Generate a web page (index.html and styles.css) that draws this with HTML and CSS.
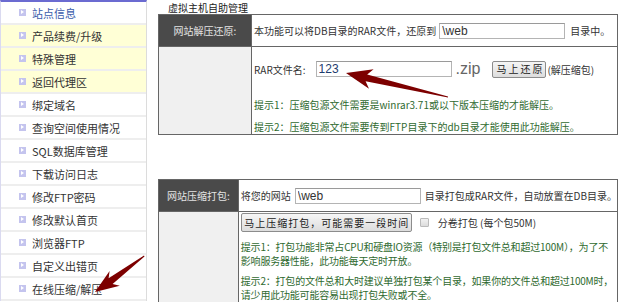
FILE: index.html
```html
<!DOCTYPE html>
<html lang="zh-CN">
<head>
  <meta charset="UTF-8">
  <title>虚拟主机自助管理</title>
  <link rel="stylesheet" href="styles.css">
</head>
<body>
  <div class="page">
    <ul class="side-menu">
      <li class="active"><span class="menu-icon"></span>站点信息</li>
      <li class="hl"><span class="menu-icon"></span>产品续费/升级</li>
      <li class="hl"><span class="menu-icon"></span>特殊管理</li>
      <li class="hl"><span class="menu-icon"></span>返回代理区</li>
      <li><span class="menu-icon"></span>绑定域名</li>
      <li><span class="menu-icon"></span>查询空间使用情况</li>
      <li><span class="menu-icon"></span>SQL数据库管理</li>
      <li><span class="menu-icon"></span>下载访问日志</li>
      <li><span class="menu-icon"></span>修改FTP密码</li>
      <li><span class="menu-icon"></span>修改默认首页</li>
      <li><span class="menu-icon"></span>浏览器FTP</li>
      <li><span class="menu-icon"></span>自定义出错页</li>
      <li><span class="menu-icon"></span>在线压缩/解压</li>
    </ul>

    <div class="main">
      <div class="main-title">虚拟主机自助管理</div>

      <!-- 解压还原 -->
      <table class="tool-table">
        <tr class="head-row">
          <th>网站解压还原:</th>
          <td>
            <div class="inline-form">
              <span>本功能可以将DB目录的RAR文件，还原到</span>
              <input class="txt txt-path" type="text" value="\web">
              <span class="after-txt">目录中。</span>
            </div>
          </td>
        </tr>
        <tr class="body-row">
          <th class="blank"></th>
          <td class="unzip-cell">
            <div class="inline-form form-line">
              <span>RAR文件名:</span>
              <input class="txt txt-name" type="text" value="123">
              <span class="ext">.zip</span>
              <button class="btn btn-small">马上还原</button>
              <span class="note">(解压缩包)</span>
            </div>
            <p class="tip tip-first">提示1：压缩包源文件需要是winrar3.71或以下版本压缩的才能解压。</p>
            <p class="tip tip-next">提示2：压缩包源文件需要传到FTP目录下的db目录才能使用此功能解压。</p>
          </td>
        </tr>
      </table>

      <!-- 压缩打包 -->
      <table class="tool-table second">
        <tr class="head-row">
          <th>网站压缩打包:</th>
          <td>
            <div class="inline-form">
              <span>将您的网站</span>
              <input class="txt txt-site" type="text" value="\web">
              <span class="after-site">目录打包成RAR文件，自动放置在DB目录。</span>
            </div>
          </td>
        </tr>
        <tr class="body-row">
          <th class="blank"></th>
          <td class="zip-cell">
            <div class="inline-form">
              <button class="btn btn-wide">马上压缩打包，可能需要一段时间</button>
              <input class="check" type="checkbox">
              <span class="check-label">分卷打包 (每个包50M)</span>
            </div>
            <p class="tip tip-zip">提示1：打包功能非常占CPU和硬盘IO资源（特别是打包文件总和超过100M），为了不<br>影响服务器性能，此功能每天定时开放。</p>
            <p class="tip tip-zip tip-zip-next">提示2：打包的文件总和大时建议单独打包某个目录，如果你的文件总和超过100M时，<br>请少用此功能可能容易出现打包失败或不全。</p>
          </td>
        </tr>
      </table>
    </div>
  </div>

  <svg class="arrows" width="620" height="302" viewBox="0 0 620 302">
    <polygon points="346,73 373.6,69.3 367.2,74.4 448,96.5 448,97.5 365.6,81.2 369,88.7" />
    <polygon points="95,292 109.6,270.9 108.6,278.3 144,255.5 144.5,256.5 112.6,284.1 119.8,285.7" />
  </svg>
</body>
</html>
```

FILE: styles.css
```css
body {
    margin: 0;
    font-family: "Noto Sans CJK SC", sans-serif;
    font-size: 10px;
    color: #333;
    background: #fff;
}
.page {
    display: flex;
    align-items: flex-start;
}

/* 左侧菜单 */
.side-menu {
    list-style: none;
    margin: 0;
    padding: 0;
    width: 145px;
    flex-shrink: 0;
    border-top: 2px solid #6b6bd1;
    border-left: 1px solid #dadaf0;
    border-right: 1px solid #dcdcdc;
    font-size: 11px;
}
.side-menu li {
    display: flex;
    align-items: center;
    height: 21px;
    border-bottom: 2px solid #eeeeee;
    background: #fff;
}
.side-menu li.hl {
    background: #ffffd6;
}
.side-menu li.active {
    color: #3b5cab;
}
.menu-icon {
    position: relative;
    width: 7px;
    height: 7px;
    margin: 0 6px 0 18px;
    background: #c4c4ee;
}
.menu-icon::after {
    content: "";
    position: absolute;
    left: 2px;
    top: 1px;
    border-left: 3px solid #fff;
    border-top: 2.5px solid transparent;
    border-bottom: 2.5px solid transparent;
}

/* 右侧内容 */
.main {
    margin-left: 11px;
    width: 460px;
}
.main-title {
    height: 14px;
    line-height: 15px;
    padding-left: 10px;
    color: #222;
}
.tool-table {
    width: 460px;
    border-collapse: collapse;
    border: 1px solid #666;
}
.tool-table.second {
    margin-top: 44px;
}
.tool-table th,
.tool-table td {
    border: 1px solid #666;
    padding: 0;
    font-weight: normal;
    text-align: left;
    vertical-align: middle;
}
.tool-table th {
    width: 92px;
    background: #4a4a4a;
    color: #e4e4e4;
    text-align: center;
}
.tool-table th.blank {
    background: #f0f0f0;
}
.head-row th,
.head-row td {
    height: 31px;
}
.tool-table td {
    padding-left: 2px;
}
.inline-form {
    display: flex;
    align-items: center;
    white-space: nowrap;
}
.txt {
    box-sizing: border-box;
    height: 16px;
    margin: 0;
    padding: 0 2px;
    border: 1px solid #b4b4b4;
    border-top-color: #9a9a9a;
    font-family: "Liberation Sans", sans-serif;
    font-size: 12px;
    color: #333;
    background: #fff;
}
.txt-path {
    width: 126px;
    margin-left: 3px;
}
.after-txt {
    margin-left: 5px;
}
.txt-site {
    width: 126px;
    margin-left: 4px;
}
.after-site {
    margin-left: 4px;
}

.unzip-cell {
    padding-top: 12px !important;
    vertical-align: top !important;
}
.form-line {
    height: 20px;
}
.txt-name {
    width: 136px;
    margin-left: 10px;
    color: #1d3c6e;
}
.ext {
    margin-left: 4px;
    font-family: "Liberation Sans", sans-serif;
    font-size: 16px;
    color: #666;
}
.btn {
    box-sizing: border-box;
    margin: 0;
    padding: 0;
    border: 1px solid #8c8c8c;
    border-radius: 2px;
    background: linear-gradient(#f6f6f6, #dddddd);
    font-family: "Noto Sans CJK SC", sans-serif;
    font-size: 10px;
    color: #222;
    line-height: 1;
}
.btn-small {
    width: 54px;
    height: 17px;
    margin-left: 12px;
    letter-spacing: 2px;
    padding-left: 2px;
}
.note {
    margin-left: 1px;
}
.tip {
    margin: 0;
    color: #2f6a2f;
    line-height: 13px;
    white-space: nowrap;
}
.tip-first {
    margin-top: 19px;
}
.tip-next {
    margin-top: 9px;
    margin-bottom: 1px;
}

.zip-cell {
    padding-top: 1px !important;
    vertical-align: top !important;
}
.btn-wide {
    width: 171px;
    height: 19px;
    letter-spacing: 1px;
    padding-left: 1px;
}
.check {
    appearance: none;
    width: 9px;
    height: 9px;
    margin: 0 0 0 8px;
    border: 1px solid #bbb;
    border-radius: 1px;
    background: linear-gradient(#f2f2f2, #dcdcdc);
}
.check-label {
    margin-left: 9px;
}
.tip-zip {
    margin-top: 8px;
    line-height: 14px;
    letter-spacing: -0.2px;
}
.tip-zip-next {
    margin-top: 6px;
}

/* 红色提示箭头 */
.arrows {
    position: absolute;
    left: 0;
    top: 0;
    pointer-events: none;
    fill: #7d0000;
}
```
